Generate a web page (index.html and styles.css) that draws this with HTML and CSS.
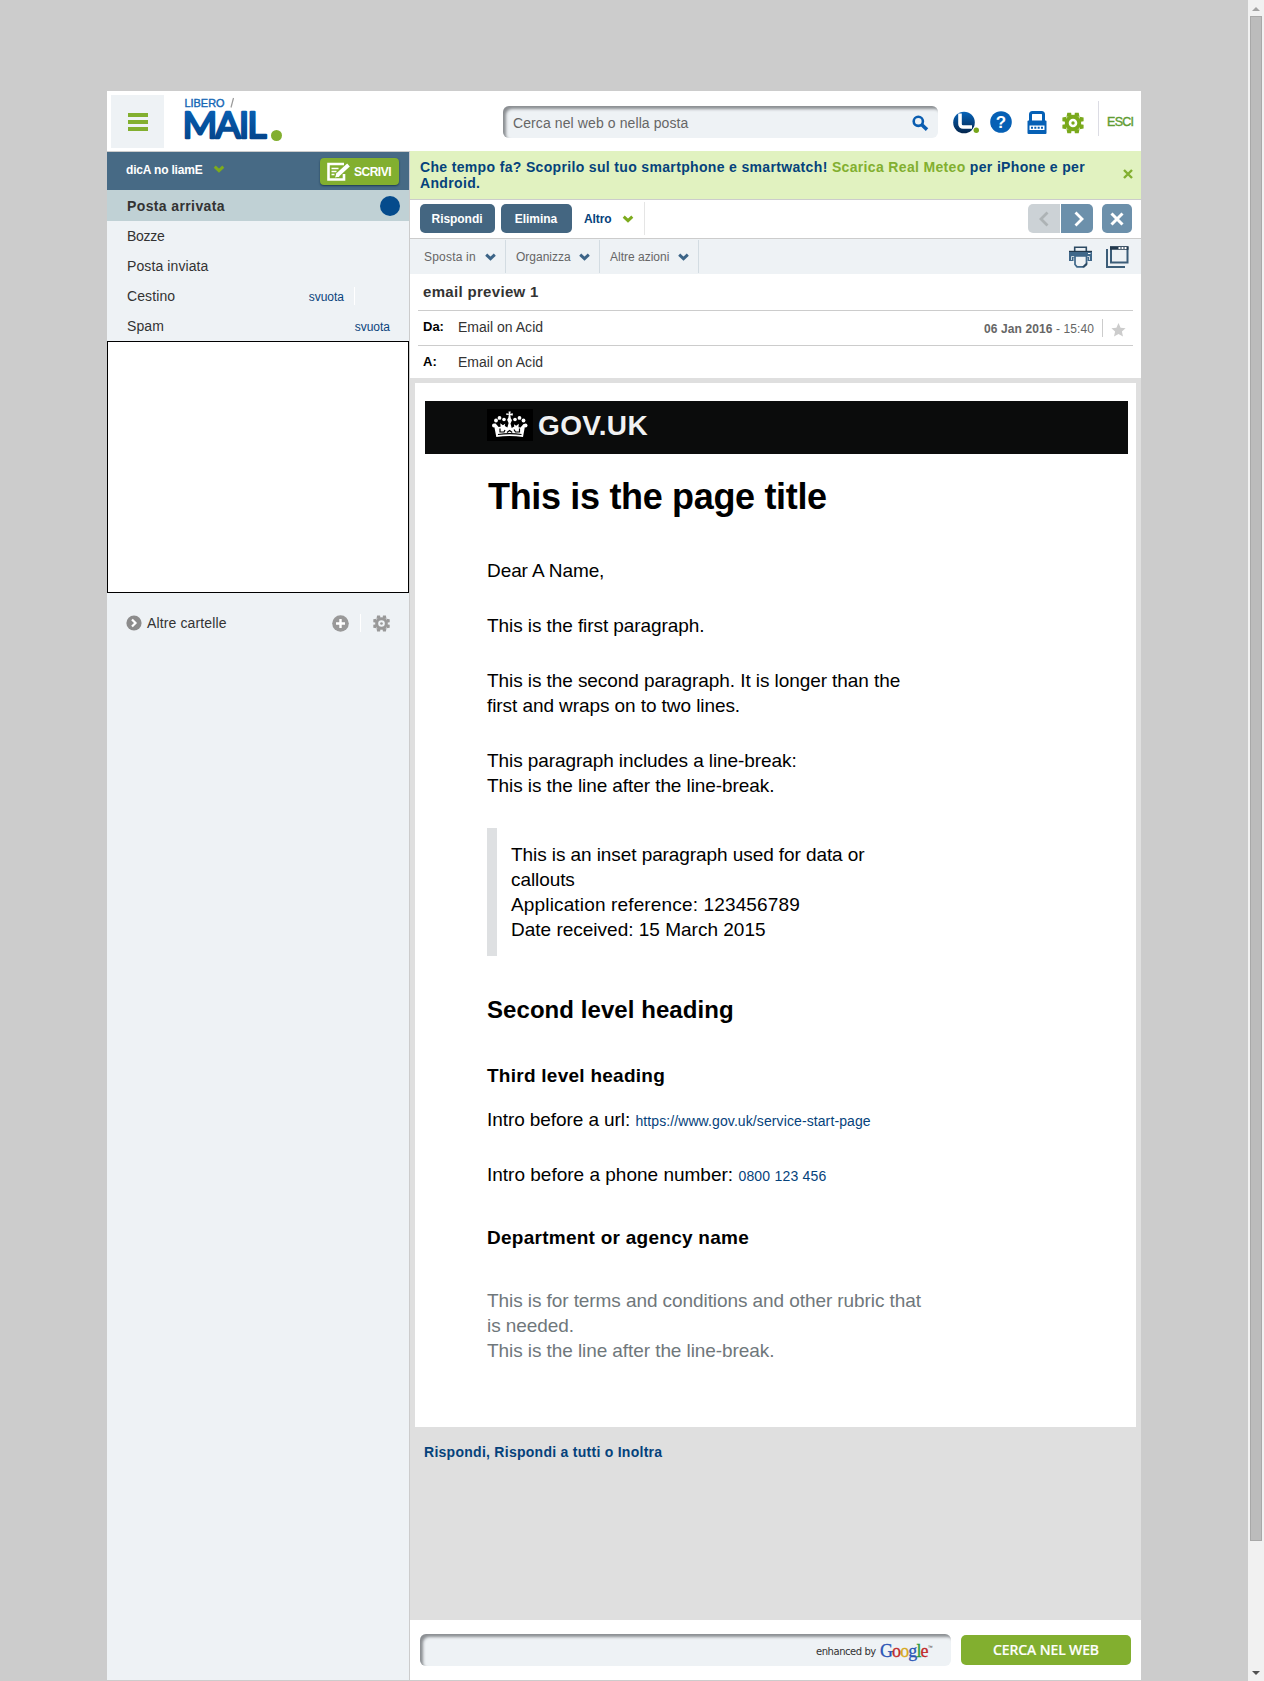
FILE: index.html
```html
<!DOCTYPE html>
<html lang="it">
<head>
<meta charset="utf-8">
<title>Libero Mail</title>
<link rel="stylesheet" href="styles.css">
</head>
<body>
<svg class="defs" width="0" height="0">
  <defs>
    <linearGradient id="blue" x1="0" y1="0" x2="0" y2="1"><stop offset="0" stop-color="#0a66bd"/><stop offset="1" stop-color="#033f82"/></linearGradient>
    <linearGradient id="orb" x1="0" y1="0" x2="0" y2="1"><stop offset="0" stop-color="#0664ba"/><stop offset="1" stop-color="#04254c"/></linearGradient>
    <symbol id="chev" viewBox="0 0 11 8"><path d="M1.2 1.7 5.5 5.6 9.8 1.7" fill="none" stroke="currentColor" stroke-width="3"/></symbol>
    <symbol id="gear" viewBox="-11 -11 22 22"><g fill="currentColor"><path fill-rule="evenodd" d="M0-8.2A8.2 8.2 0 1 1 0 8.2 8.2 8.2 0 1 1 0-8.2ZM0-4.3A4.3 4.3 0 1 0 0 4.3 4.3 4.3 0 1 0 0-4.3Z"/><circle r="1.7"/><path d="M-5.700-10.300h3.800l.8 4h-5.400zM1.900-10.300h3.800l.8 4h-5.400zM-5.700 10.300h3.800l.8-4h-5.400zM1.900 10.300h3.800l.8-4h-5.400zM-10.600-5.500v3.800l4 .8v-5.400zM-10.600 1.700v3.800l4 .8v-5.400zM10.600-5.500v3.800l-4 .8v-5.400zM10.600 1.700v3.800l-4 .8v-5.400z"/></g></symbol>
  </defs>
</svg>
<div class="window">
  <div class="stage">
    <div class="app">
      <header class="top">
        <button class="menu" aria-label="Menu"><i></i><i></i><i></i></button>
        <svg class="logo" width="96" height="50" viewBox="0 0 96 50">
          <text class="logo-small" x="0.500" y="12" textLength="40" lengthAdjust="spacingAndGlyphs">LIBERO</text>
          <path d="M47 12.500 49.500 3" stroke="#999" stroke-width="1.2"/>
          <text class="logo-big" x="-1.500" y="43.200" textLength="84" lengthAdjust="spacing" fill="url(#blue)" stroke="url(#blue)">MAIL</text>
          <circle cx="92.500" cy="40.500" r="5.500" fill="#82af2f"/>
        </svg>
        <div class="search"><span class="search-text">Cerca nel web o nella posta</span>
          <svg width="17" height="17" viewBox="0 0 17 17" fill="none" stroke="#0a5db0"><circle cx="6.3" cy="6.3" r="4.6" stroke-width="2.6"/><path d="M9.8 9.8 15 14.6" stroke-width="3.6"/></svg>
        </div>
        <nav class="apps">
          <svg width="27" height="24" viewBox="0 0 27 24"><circle cx="11" cy="12.5" r="10.8" fill="url(#orb)"/><path d="M7 3.5v10.5a3 3 0 0 0 3 3h9" fill="none" stroke="#fff" stroke-width="3.6"/><circle cx="23.3" cy="20.3" r="3.6" fill="#fff"/><circle cx="23.3" cy="20.3" r="2.7" fill="#76a51a"/></svg>
          <svg width="22" height="24" viewBox="0 0 22 24"><circle cx="11" cy="12" r="10.8" fill="#0660b5"/><text class="q" x="11" y="18" text-anchor="middle">?</text></svg>
          <svg width="20" height="24" viewBox="0 0 20 24"><path d="M3.5 10V3.500q0-2 2-2h9q2 0 2 2V10" fill="none" stroke="#0660b5" stroke-width="3"/><rect x=".5" y="9.500" width="19" height="13.500" rx="1" fill="#0660b5"/><path d="M2.500 14.500h15v4.500h-15z" fill="#fff"/><path d="M4 16.800h12" stroke="#0660b5" stroke-width="2" stroke-dasharray="2 1.330"/></svg>
          <svg class="gear" width="22" height="22"><use href="#gear"/></svg>
        </nav>
        <a class="exit">ESCI</a>
      </header>
      <div class="columns">
        <aside class="side">
          <div class="account">
            <b class="account-name">dicA no liamE</b><svg class="green" width="12" height="8"><use href="#chev"/></svg>
            <button class="write"><svg width="24" height="20" viewBox="0 0 24 20" fill="none" stroke="#fff"><path d="M17 12v5.500H1.500V2H17" stroke-width="2.600"/><path d="M4.500 6.500h7M4.500 9.500h5M4.500 12.500h3" stroke-width="1.400"/><path d="M10 13.500 21.500 3" stroke-width="4"/><path d="M8 15.500l1.500-4 3 3z" fill="#fff" stroke="none"/></svg><span class="write-text">SCRIVI</span></button>
          </div>
          <div class="row active"><span class="active-text">Posta arrivata</span><i class="count"></i></div>
          <div class="row"><span class="folder tight">Bozze</span></div>
          <div class="row"><span class="folder">Posta inviata</span></div>
          <div class="row"><span class="folder">Cestino</span><a class="empty ruled">svuota</a></div>
          <div class="row"><span class="folder">Spam</span><a class="empty">svuota</a></div>
          <div class="adbox"></div>
          <div class="others">
            <svg width="16" height="16" viewBox="0 0 16 16"><circle cx="8" cy="8" r="7.600" fill="#8c8c8c"/><path d="M6 4.500 9.500 8 6 11.500" fill="none" stroke="#fff" stroke-width="2.200"/></svg>
            <span class="others-text">Altre cartelle</span>
            <svg class="plus" width="17" height="17" viewBox="0 0 17 17"><circle cx="8.500" cy="8.500" r="8.300" fill="#999"/><path d="M8.500 4v9M4 8.500h9" stroke="#fff" stroke-width="2.400"/></svg>
            <i class="rule"></i>
            <svg class="grey" width="17" height="17"><use href="#gear"/></svg>
          </div>
        </aside>
        <main class="main">
          <div class="promo"><p class="promo-text">Che tempo fa? Scoprilo sul tuo smartphone e smartwatch! <em>Scarica Real Meteo</em> per iPhone e per<br>Android.</p>
            <svg width="10" height="10" viewBox="0 0 10 10"><path d="M1 1l8 8M9 1 1 9" stroke="#82af2f" stroke-width="2.400"/></svg></div>
          <div class="tools">
            <button class="btn reply">Rispondi</button><button class="btn delete">Elimina</button>
            <span class="more"><b class="more-text">Altro</b><svg class="green" width="12" height="8"><use href="#chev"/></svg></span>
            <span class="pager"><i class="prev"><svg width="10" height="16" viewBox="0 0 10 16"><path d="M8.500 1.500 2 8l6.500 6.500" fill="none" stroke="#adb3b5" stroke-width="2.800"/></svg></i><i class="next"><svg width="10" height="16" viewBox="0 0 10 16"><path d="M1.500 1.500 8 8l-6.500 6.500" fill="none" stroke="#fff" stroke-width="2.800"/></svg></i></span>
            <i class="close"><svg width="14" height="14" viewBox="0 0 14 14"><path d="M1.500 1.500l11 11M12.500 1.500l-11 11" stroke="#fff" stroke-width="3"/></svg></i>
          </div>
          <div class="subtools">
            <span class="sub s1"><span>Sposta in</span><svg width="11" height="8"><use href="#chev"/></svg></span>
            <span class="sub s2"><span>Organizza</span><svg width="11" height="8"><use href="#chev"/></svg></span>
            <span class="sub s3"><span>Altre azioni</span><svg width="11" height="8"><use href="#chev"/></svg></span>
            <span class="icons">
              <svg width="23" height="22" viewBox="0 0 23 22"><path d="M5.700 5V1.200h11.600V5" fill="#eef2f5" stroke="#2c4a63" stroke-width="1.600"/><path d="M0 5h23v10h-4.500v-3.500h-14V15H0z" fill="#3f6789"/><path d="M0 5.400h23" stroke="#23394d" stroke-width="1.200"/><path d="M19 7.500h2.500" stroke="#fff"/><path d="M2.500 14v-3.500h18V14" fill="none" stroke="#eef2f5" stroke-width=".8"/><path d="M6 10v8.500l2 2.300h6.500l3-3V10z" fill="#eef2f5" stroke="#3f6789" stroke-width="1.700"/><path d="M13 21l5.200-5v3l-3 2.500z" fill="#2c4a63"/></svg>
              <svg width="23" height="22" viewBox="0 0 23 22" fill="none" stroke="#3c5d78"><path d="M1 3v18h18" stroke-width="2"/><rect x="5" y="1.500" width="16.500" height="15" stroke-width="2"/><path d="M4 2h18.500" stroke="#23394d" stroke-width="3.500"/><path d="M12.500 2h8.500" stroke="#fff" stroke-width="2" stroke-dasharray="2 1"/></svg>
            </span>
          </div>
          <section class="head">
            <h2 class="subject"><span>email preview 1</span></h2>
            <div class="line from"><b>Da:</b><span class="who">Email on Acid</span><span class="date"><b>06 Jan 2016</b> - 15:40</span><i class="daterule"></i><svg width="15" height="14" viewBox="0 0 15 14"><path d="M7.500 0 9.600 4.700 14.600 5.200 10.900 8.600 12 13.500 7.500 11 3 13.500 4.100 8.600.4 5.200 5.400 4.700z" fill="#ccc"/></svg></div>
            <div class="line to"><b>A:</b><span class="who">Email on Acid</span></div>
          </section>
          <section class="body">
            <article class="mail">
              <div class="govbar">
                <svg width="46" height="32" viewBox="0 0 46 32"><path fill="#000" d="M0 0h46v32H0z"/><g fill="#fff"><circle cx="7" cy="16.500" r="2"/><circle cx="9" cy="11.500" r="1.900"/><circle cx="12.500" cy="8.900" r="1.900"/><circle cx="17" cy="10.500" r="1.800"/><circle cx="28" cy="10.500" r="1.800"/><circle cx="32.500" cy="8.900" r="1.900"/><circle cx="36.500" cy="11.500" r="1.900"/><circle cx="38.500" cy="16.500" r="2"/><path d="M21.500 2.500h2.200l-.5 2.300 2.600-.5v2.300l-2.500-.4.5 3 1.200 2-1.500 3.200 1.200 4.500 2.600-1.500-.4-2.200 2.300 1.500 2.600-2-.3 3.500 2 .2 3-3.500 1.800.6-2.300 12.500q-13.500-2-26.700 0L6.800 15l1.800-.6 3 3.500 2-.2-.3-3.500 2.600 2 2.300-1.500-.4 2.200 2.600 1.500 1.200-4.500-1.500-3.200 1.200-2 .5-3-2.500.4V4.300l2.600.5z"/></g><g fill="none" stroke="#000" stroke-width="1.200"><path d="M11 25.500q12-1.800 23.500 0"/><path d="M13 19.500v3.500h4l1-2M27 20.500l1.500 2.500h4v-3.500M20 23.500l2.600-2 2.600 2"/></g></svg>
                <span class="gov">GOV.UK</span>
              </div>
              <div class="copy">
                <h1><span>This is the page title</span></h1>
                <p>Dear A Name,</p>
                <p>This is the first paragraph.</p>
                <p>This is the second paragraph. It is longer than the<br>first and wraps on to two lines.</p>
                <p>This paragraph includes a line-break:<br>This is the line after the line-break.</p>
                <blockquote>This is an inset paragraph used for data or<br>callouts<br><span class="ref">Application reference: 123456789</span><br><span class="received">Date received: 15 March 2015</span></blockquote>
                <h2><span>Second level heading</span></h2>
                <h3><span>Third level heading</span></h3>
                <p>Intro before a url: <a>https://www.gov.uk/service-start-page</a></p>
                <p class="call">Intro before a phone number: <a class="phone">0800 123 456</a></p>
                <h3 class="dept"><span>Department or agency name</span></h3>
                <p class="terms">This is for terms and conditions and other rubric that<br>is needed.<br>This is the line after the line-break.</p>
              </div>
            </article>
            <p class="actions"><span>Rispondi, Rispondi a tutti o Inoltra</span></p>
          </section>
          <footer class="foot">
            <div class="websearch"><span class="by">enhanced by</span><span class="google"><i class="gb">G</i><i class="gr">o</i><i class="gy">o</i><i class="gb">g</i><i class="gg">l</i><i class="gr">e</i></span><span class="tm">™</span></div>
            <button class="go">CERCA NEL WEB</button>
          </footer>
        </main>
      </div>
    </div>
  </div>
  <div class="scroll"><i class="up"></i><i class="thumb"></i><i class="down"></i></div>
</div>
</body>
</html>
```
FILE: styles.css
```css
* { box-sizing: border-box; }
body { margin: 0; background: #ccc; font: 13px/16px "Liberation Sans", Arial, sans-serif; color: #333; }
p, h1, h2, h3, blockquote { margin: 0; }
i, em { font-style: normal; }
svg { display: block; flex: none; }
button { border: 0; padding: 0; margin: 0; font-family: inherit; color: #fff; }
span, b, a, p, blockquote { white-space: nowrap; }
.defs { position: absolute; }
.window { display: flex; height: 1681px; overflow: hidden; }
.stage { flex: 1; padding: 91px 107px 0; border-bottom: 1px solid #ccc; }
.app { width: 1034px; height: 1589px; background: #fff; display: flex; flex-direction: column; }
.green { color: #7dab1d; }

/* top bar */
.top { height: 60px; display: flex; padding: 4px 0 0 4px; }
.menu { width: 53px; height: 53px; background: #eef2f5; display: flex; flex-direction: column; gap: 3px; padding: 18px 16px 0 17px; }
.menu i { height: 4px; background: #82af2f; }
.logo { margin: 0 0 0 20px; overflow: visible; }
.logo-small { font: 11px "Liberation Sans", Arial, sans-serif; fill: #1467b5; stroke: #1467b5; stroke-width: .4px; }
.logo-big { font: 37.500px Lato, sans-serif; stroke-width: 2.400px; stroke-linejoin: round; stroke-linecap: round; }
.search { margin: 11px 0 0 223px; width: 435px; height: 32px; border-radius: 6px; background: #eef2f5; box-shadow: inset 3px 3px 3px #8b8e92; display: flex; justify-content: space-between; padding: 9px 9px 0 10px; }
.search-text { font-size: 14px; color: #666; letter-spacing: .1px; }
.apps { display: flex; margin: 15px 0 0 15px; }
.apps svg:nth-child(2) { margin-left: 10px; }
.apps svg:nth-child(3) { margin: 1px 0 0 15px; }
.apps .gear { color: #7aa91c; margin: 2px 0 0 15px; }
.q { font: bold 17px "Liberation Sans", Arial, sans-serif; fill: #fff; }
.exit { margin: 6px 0 0 14px; height: 35px; border-left: 1px solid #dcdce4; padding: 13px 0 0 8px; font-size: 12.500px; line-height: 16px; color: #5f9c33; -webkit-text-stroke: .4px #5f9c33; letter-spacing: -.7px; }

/* folders */
.columns { display: flex; flex: 1; }
.side { width: 303px; background: #eef2f5; border-right: 1px solid #ccc; }
.account { height: 39px; border-top: 1px solid #ccc; background: #476a85; color: #fff; display: flex; padding: 0 10px 0 19px; }
.account-name { font-size: 12px; line-height: 37px; width: 87px; letter-spacing: -.18px; }
.account > .green { margin-top: 13px; }
.write { margin: 6px 0 0 auto; width: 79px; height: 27px; border-radius: 4px; background: #82af2f; display: flex; align-items: center; padding-left: 7px; gap: 3px; box-shadow: 0 1px 2px #1c3a52; }
.write-text { font-size: 12px; font-weight: bold; letter-spacing: -.5px; }
.row { height: 30px; display: flex; justify-content: space-between; align-items: center; padding: 0 19px 0 20px; }
.row.active { height: 31px; background: #c0d1d5; padding: 0 9px 0 20px; font-weight: bold; }
.active-text { font-size: 14px; letter-spacing: .38px; }
.folder { font-size: 14px; letter-spacing: .1px; }
.folder.tight { letter-spacing: -.3px; }
.count { width: 20px; height: 20px; border-radius: 50%; background: #054b8c; }
.empty { color: #0b437c; font-size: 12px; padding-top: 1px; }
.ruled { margin-right: 35px; padding-right: 10px; border-right: 1px solid #fff; height: 18px; line-height: 18px; }
.adbox { height: 252px; border: 1px solid #000; background: #fff; }
.others { height: 60px; display: flex; align-items: center; padding: 0 19px; }
.others-text { font-size: 14px; margin: 0 auto 0 5px; letter-spacing: .13px; }
.rule { width: 1px; height: 18px; background: #fff; margin: 0 12px 0 11px; }
.grey { color: #999; }

/* reading pane */
.main { flex: 1; display: flex; flex-direction: column; }
.promo { height: 49px; background: #e1f2c0; border-bottom: 1px solid #ccc; display: flex; justify-content: space-between; padding: 8px 8px 0 10px; color: #05427b; font-weight: bold; }
.promo-text { font-size: 14px; letter-spacing: .34px; }
.promo em { color: #82af2f; }
.promo svg { margin-top: 10px; }
.tools { height: 39px; border-bottom: 1px solid #ccc; display: flex; padding: 4px 9px 0 10px; }
.btn { height: 29px; border-radius: 5px; background: #446681; font-size: 12px; font-weight: bold; letter-spacing: -.05px; padding-right: 1px; }
.reply { width: 75px; margin-right: 6px; }
.delete { width: 71px; }
.more { display: flex; align-items: center; width: 73px; height: 33px; margin-top: -2px; padding-left: 12px; border-right: 1px solid #e5e5e5; color: #05427b; font-size: 12px; gap: 10px; }
.more-text { letter-spacing: -.1px; }
.pager { display: flex; gap: 1px; margin-left: auto; }
.prev, .next, .close { width: 32px; height: 29px; display: flex; align-items: center; justify-content: center; }
.prev { background: #ccd2d6; border-radius: 5px 0 0 5px; }
.next { background: #6c90ab; border-radius: 0 5px 5px 0; padding-left: 4px; }
.close { width: 30px; margin-left: 9px; background: #6c90ab; border-radius: 5px; }
.subtools { height: 35px; background: #eef2f5; display: flex; padding: 1px 12px 0 0; font-size: 12px; color: #666; }
.sub { display: flex; align-items: center; justify-content: space-between; height: 33px; border-right: 1px solid #d3dce2; padding: 0 9px 0 10px; width: 94px; }
.sub svg { color: #3c6487; }
.s1 { width: 96px; padding-left: 14px; letter-spacing: .2px; }
.s3 { width: 99px; padding-left: 10px; }
.icons { display: flex; gap: 14px; margin: 6px 0 0 auto; }
.head { height: 104px; padding: 0 8px; }
.subject { height: 36px; font-size: 15px; line-height: 35px; padding-left: 5px; letter-spacing: .32px; }
.line { height: 35px; border-top: 1px solid #ccc; display: flex; padding: 8px 7px 0 5px; }
.line > b { width: 35px; color: #000; }
.who { font-size: 14px; letter-spacing: .02px; }
.date { margin: 2px 8px 0 auto; font-size: 12px; color: #666; letter-spacing: .1px; }
.daterule { width: 1px; height: 18px; background: #ccc; margin-right: 8px; }
.line svg { margin-top: 4px; }
.body { flex: 1; background: #dfdfdf; padding: 5px 5px 0; }
.mail { height: 1044px; background: #fff; padding: 18px 8px 0 10px; color: #000; }
.govbar { height: 53px; background: #0b0c0c; display: flex; padding: 8px 0 0 62px; gap: 5px; }
.gov { font-size: 28px; font-weight: bold; line-height: 34px; color: #f0f1f2; letter-spacing: .35px; }
.copy { padding-left: 62px; font-size: 19px; line-height: 25px; letter-spacing: -.08px; }
h1 { font-size: 36px; line-height: 42px; margin: 22px 0 40px; padding-left: 1px; letter-spacing: -.33px; }
.copy p { margin-bottom: 30px; }
blockquote { border-left: 10px solid #dee0e2; padding: 14px; margin-bottom: 39px; }
.ref { letter-spacing: .15px; }
.received { letter-spacing: 0; }
.copy h2 { font-size: 24px; line-height: 30px; margin-bottom: 38px; letter-spacing: .06px; }
h3 { font-size: 19px; line-height: 25px; margin-bottom: 19px; letter-spacing: .26px; }
.copy a { font-size: 14px; line-height: 1; color: #05427b; letter-spacing: .1px; }
.call { letter-spacing: 0; }
.copy .phone { letter-spacing: .2px; }
.dept { margin: 38px 0; }
.copy .terms { color: #6f777b; }
.actions { padding: 17px 0 0 9px; font-size: 14px; font-weight: bold; color: #05427b; letter-spacing: .27px; }
.foot { height: 60px; display: flex; padding: 14px 10px 0; }
.websearch { width: 531px; height: 32px; border-radius: 6px; background: #eef2f5; box-shadow: inset 3px 3px 3px #8b8e92; display: flex; padding-left: 396px; line-height: 35px; }
.by { font: 10px/36px "DejaVu Sans", sans-serif; letter-spacing: -.45px; width: 64px; color: #333; }
.google { font: 18px/34px "Liberation Serif", serif; letter-spacing: -.9px; -webkit-text-stroke: .3px; }
.gb { color: #2a55b5; } .gr { color: #c02a2a; } .gy { color: #d8a91b; } .gg { color: #2c9a3c; }
.tm { font-size: 5px; line-height: 26px; }
.go { margin: 1px 0 0 10px; width: 170px; height: 30px; border-radius: 5px; background: #82af2f; font: 500 14px "Noto Sans", sans-serif; letter-spacing: -.1px; -webkit-text-stroke: .2px; padding-bottom: 1px; }

/* window scrollbar */
.scroll { width: 16px; background: #f1f1f1; display: flex; flex-direction: column; align-items: center; padding-top: 7px; }
.up, .down { border: 4px solid transparent; border-top: 0; border-bottom: 4px solid #a3a3a3; }
.down { border-top: 4px solid #505050; border-bottom: 0; margin-top: 130px; }
.thumb { width: 12px; height: 1525px; margin-top: 5px; background: #bcbcbc; border: 1px solid #a8a8a8; }
```
